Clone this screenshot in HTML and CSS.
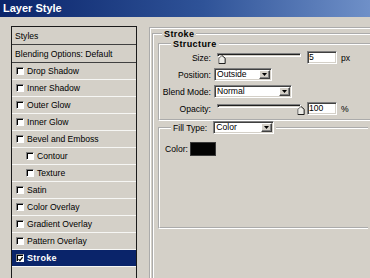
FILE: index.html
```html
<!DOCTYPE html>
<html>
<head>
<meta charset="utf-8">
<link rel="stylesheet" href="styles.css">
</head>
<body>
<div class="titlebar">Layer Style</div>
<div class="main">
  <div class="styles-list">
    <div class="list-head">Styles</div>
    <div class="list-blend">Blending Options: Default</div>
    <div class="list-item"><span class="check"></span>Drop Shadow</div>
    <div class="list-item"><span class="check"></span>Inner Shadow</div>
    <div class="list-item"><span class="check"></span>Outer Glow</div>
    <div class="list-item"><span class="check"></span>Inner Glow</div>
    <div class="list-item"><span class="check"></span>Bevel and Emboss</div>
    <div class="list-item sub"><span class="check"></span>Contour</div>
    <div class="list-item sub"><span class="check"></span>Texture</div>
    <div class="list-item"><span class="check"></span>Satin</div>
    <div class="list-item"><span class="check"></span>Color Overlay</div>
    <div class="list-item"><span class="check"></span>Gradient Overlay</div>
    <div class="list-item"><span class="check"></span>Pattern Overlay</div>
    <div class="list-item selected"><span class="check checked"><svg width="6" height="6" viewBox="0 0 6 6"><path d="M0.6 3.1 L2.3 4.9 L5.5 0.9" stroke="#000" stroke-width="1.5" fill="none"/></svg></span>Stroke</div>
  </div>
  <div class="page">
    <fieldset class="group stroke-group">
      <legend class="group-title stroke-title">Stroke</legend>
      <fieldset class="group structure">
        <legend class="group-title structure-title">Structure</legend>
        <div class="form-rows">
          <div class="form-row">
            <span class="field-label">Size:</span>
            <div class="slider">
              <div class="track"></div>
              <svg class="thumb" style="left:1px" width="8" height="9" viewBox="0 0 8 10"><path d="M0.5 9.5V3.6L4 0.6L7.5 3.6V9.5Z" fill="#ecebe6"/><path d="M0.5 9.5V3.6L4 0.6" stroke="#606060" fill="none"/><path d="M4 0.6L7.5 3.6V9.5H0.5" stroke="#000" fill="none"/></svg>
            </div>
            <div class="textbox">5</div>
            <span class="unit">px</span>
          </div>
          <div class="form-row">
            <span class="field-label">Position:</span>
            <div class="select select-position"><span class="select-text">Outside</span><span class="drop-btn"><svg width="5" height="3" viewBox="0 0 5 3"><path d="M0 0H5L2.5 3Z" fill="#000"/></svg></span></div>
          </div>
          <div class="form-row">
            <span class="field-label">Blend Mode:</span>
            <div class="select select-blend"><span class="select-text">Normal</span><span class="drop-btn"><svg width="5" height="3" viewBox="0 0 5 3"><path d="M0 0H5L2.5 3Z" fill="#000"/></svg></span></div>
          </div>
          <div class="form-row">
            <span class="field-label">Opacity:</span>
            <div class="slider">
              <div class="track"></div>
              <svg class="thumb" style="left:80px" width="8" height="9" viewBox="0 0 8 10"><path d="M0.5 9.5V3.6L4 0.6L7.5 3.6V9.5Z" fill="#ecebe6"/><path d="M0.5 9.5V3.6L4 0.6" stroke="#606060" fill="none"/><path d="M4 0.6L7.5 3.6V9.5H0.5" stroke="#000" fill="none"/></svg>
            </div>
            <div class="textbox">100</div>
            <span class="unit">%</span>
          </div>
        </div>
      </fieldset>
      <fieldset class="group fill">
        <legend class="fill-legend"><span class="fill-label">Fill Type:</span><span class="select select-fill"><span class="select-text">Color</span><span class="drop-btn"><svg width="5" height="3" viewBox="0 0 5 3"><path d="M0 0H5L2.5 3Z" fill="#000"/></svg></span></span></legend>
        <div class="color-row"><span class="color-label">Color:</span><span class="swatch"></span></div>
      </fieldset>
    </fieldset>
  </div>
</div>
</body>
</html>
```
FILE: styles.css
```css
* { box-sizing: border-box; }
html, body {
  margin: 0;
  width: 370px;
  height: 278px;
  overflow: hidden;
}
body {
  background: #d4d0c8;
  font-family: "Liberation Sans", Arial, sans-serif;
  font-size: 8.6px;
  color: #000;
}
.titlebar {
  height: 17px;
  background: linear-gradient(90deg, #0a246a 0%, #2f5398 55%, #6f90c8 100%);
  color: #fff;
  font-weight: bold;
  font-size: 11px;
  line-height: 17px;
  padding-left: 3px;
}
.main {
  display: flex;
  align-items: flex-start;
  gap: 12px;
  padding: 9px 0 0 11px;
  height: 261px;
}
.styles-list {
  flex: none;
  width: 126px;
  height: 252px;
  border: 1px solid #1a1a1a;
  border-bottom: none;
}
.list-head, .list-blend {
  height: 18px;
  border-bottom: 1px solid #404040;
  display: flex;
  align-items: center;
  padding-left: 3px;
}
.list-item {
  height: 17px;
  border-bottom: 1px solid #f6f6f4;
  display: flex;
  align-items: center;
  gap: 3px;
  padding-left: 4px;
}
.list-item.sub { padding-left: 14px; }
.list-item.selected {
  background: #0a246a;
  color: #fff;
  font-weight: bold;
  font-size: 9px;
  letter-spacing: 0.3px;
}
.check {
  flex: none;
  width: 8px;
  height: 8px;
  background: #fff;
  border: 1px solid;
  border-color: #808080 #fff #fff #808080;
  box-shadow: inset 1px 1px 0 #000;
  display: flex;
  align-items: center;
  justify-content: center;
}
.check.checked svg { margin: 1px 0 0 1px; }

.page {
  flex: none;
  width: 221px;
  height: 251px;
  margin-top: 1px;
  border-top: 2px groove #fff;
  border-left: 2px groove #fff;
  padding-left: 1px;
}
fieldset.group {
  margin: 0;
  min-inline-size: 0;
  border: 2px groove #fff;
  border-right: none;
}
.stroke-group {
  width: 218px;
  height: 249px;
  padding: 0 0 0 4px;
  border-bottom: none !important;
}
.group-title {
  font-weight: bold;
  font-size: 9px;
  letter-spacing: 0.4px;
  line-height: 10px;
  padding: 0 2px;
}
.stroke-title { margin-left: 4px; }
.structure {
  width: 212px;
  padding: 0;
}
.structure-title { margin-left: 11px; }
.form-rows {
  display: flex;
  flex-direction: column;
  gap: 4px;
  padding: 2px 0 4px;
}
.form-row {
  display: flex;
  align-items: center;
  height: 13px;
}
.field-label {
  flex: none;
  width: 51px;
  text-align: right;
  margin-right: 3px;
}
.slider {
  flex: none;
  position: relative;
  width: 84px;
  height: 13px;
  margin-left: 3px;
}
.track {
  margin-top: 2px;
  height: 4px;
  border: 1px solid;
  border-color: #808080 #fff #fff #808080;
  box-shadow: inset 1px 1px 0 #202020;
  background: #d4d0c8;
}
.thumb {
  position: absolute;
  top: 4px;
  display: block;
}
.textbox {
  flex: none;
  width: 30px;
  height: 13px;
  margin-left: 6px;
  background: #fff;
  border: 1px solid;
  border-color: #808080 #fff #fff #808080;
  box-shadow: inset 1px 1px 0 #404040, inset -1px -1px 0 #d4d0c8;
  padding-left: 1px;
  line-height: 11px;
}
.unit { margin-left: 4px; }
.select {
  flex: none;
  display: flex;
  align-items: center;
  justify-content: space-between;
  height: 13px;
  background: #fff;
  border: 1px solid;
  border-color: #808080 #fff #fff #808080;
  box-shadow: inset 1px 1px 0 #404040, inset -1px -1px 0 #d4d0c8;
  padding: 1px;
}
.select-text { padding-left: 1px; line-height: 9px; }
.select-position { width: 58px; }
.select-blend { width: 78px; }
.select-fill { width: 61px; }
.drop-btn {
  flex: none;
  width: 11px;
  height: 9px;
  background: #d4d0c8;
  border: 1px solid;
  border-color: #fff #404040 #404040 #fff;
  box-shadow: inset -1px -1px 0 #808080;
  display: flex;
  align-items: center;
  justify-content: center;
}
.drop-btn svg { display: block; margin: 0 1px 1px 0; }
.fill {
  width: 210px;
  margin: 6px 0 0 2px;
  padding: 8px 0 71px 5px;
}
.fill-legend {
  display: flex;
  align-items: center;
  gap: 6px;
  margin-left: 6px;
  padding: 0 2px;
}
.color-row {
  display: flex;
  align-items: center;
  gap: 2px;
  height: 14px;
}
.color-label { width: 23px; }
.swatch {
  width: 26px;
  height: 14px;
  background: #030303;
  border: 1px solid #3a3a3a;
}
```
